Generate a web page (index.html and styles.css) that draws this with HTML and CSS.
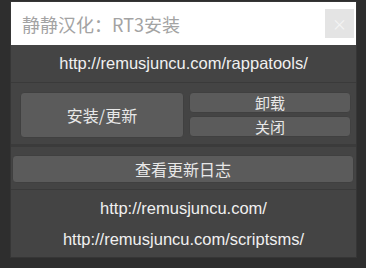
FILE: index.html
```html
<!DOCTYPE html>
<html lang="zh">
<head>
    <meta charset="UTF-8">
    <title>静静汉化：RT3安装</title>
    <link rel="stylesheet" href="styles.css">
</head>
<body>
    <div class="ventana">
        <div class="titulo">
            <span>静静汉化：RT3安装</span>
            <div class="cerrar">×</div>
        </div>

        <div class="fila enlace">http://remusjuncu.com/rappatools/</div>

        <div class="fila botones">
            <button class="boton grande">安装/更新</button>
            <div class="columna">
                <button class="boton">卸载</button>
                <button class="boton">关闭</button>
            </div>
        </div>

        <div class="fila registro">
            <button class="boton ancho">查看更新日志</button>
        </div>

        <div class="pie">
            <div>http://remusjuncu.com/</div>
            <div>http://remusjuncu.com/scriptsms/</div>
        </div>
    </div>
</body>
</html>
```

FILE: styles.css
```css
body {
    margin: 0;
    height: 268px;
    background-color: #2e2e2e;
    font-family: "Noto Sans CJK SC", "Liberation Sans", sans-serif;
    overflow: hidden;
}
.ventana {
    width: 345px;
    margin: 2px 0 0 11px;
    background: #444444;
    box-shadow: 0 0 0 1px #363636;
}
.titulo {
    height: 43px;
    background: white;
    display: flex;
    align-items: center;
    padding: 0 2px 0 11px;
    font-size: 18px;
    color: #a3a3a3;
}
.cerrar {
    margin-left: auto;
    width: 29px;
    height: 29px;
    background: #e4e4e4;
    color: #f4f4f4;
    font-size: 15px;
    display: flex;
    align-items: center;
    justify-content: center;
}
.fila {
    border-bottom: 1px solid #3a3a3a;
}
.enlace {
    height: 37px;
    display: flex;
    align-items: center;
    justify-content: center;
    font-family: "Liberation Sans", sans-serif;
    font-size: 16.5px;
    color: #f0f0f0;
}
.botones {
    display: flex;
    gap: 5px;
    padding: 9px 5px 6px 9px;
    border-bottom: 3px solid #3b3b3b;
}
.columna {
    flex: 1;
    display: flex;
    flex-direction: column;
    gap: 3px;
}
.boton {
    font-family: "Noto Sans CJK SC", sans-serif;
    background: #5b5b5b;
    color: #e8e8e8;
    border: 1px solid #404040;
    border-radius: 4px;
    font-size: 15px;
    padding: 0;
    line-height: 1;
}
.grande {
    width: 164px;
    height: 46px;
    font-size: 16px;
}
.columna .boton {
    height: 21px;
}
.registro {
    padding: 8px 2px 6px 1px;
}
.ancho {
    width: 100%;
    height: 28px;
    font-size: 16px;
}
.pie {
    height: 67px;
    display: flex;
    flex-direction: column;
    justify-content: center;
    align-items: center;
    gap: 12px;
    font-family: "Liberation Sans", sans-serif;
    font-size: 16.5px;
    color: #f0f0f0;
}
```
